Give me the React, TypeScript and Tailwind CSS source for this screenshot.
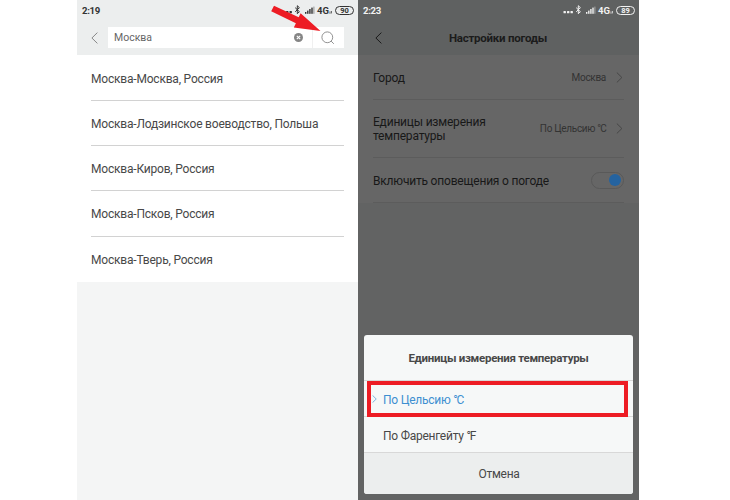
import React from "react";

const cities = [
  "Москва-Москва, Россия",
  "Москва-Лодзинское воеводство, Польша",
  "Москва-Киров, Россия",
  "Москва-Псков, Россия",
  "Москва-Тверь, Россия",
];

function StatusBar({ time, battery, dark }: { time: string; battery: string; dark?: boolean }) {
  return (
    <div className={`flex h-5 shrink-0 items-center justify-between pl-[5px] pr-1 ${dark ? "text-[#f2f2f2]" : "text-[#333]"}`}>
      <span className="pt-px text-[9.6px] font-bold leading-none tracking-[-0.3px]">{time}</span>
      <div className="flex items-center">
        <svg className="h-3 w-[35px]" viewBox="0 0 35 12" fill="currentColor">
          <rect x="0.5" y="7.1" width="2.4" height="2.2" rx="0.5" />
          <rect x="4" y="7.1" width="2.4" height="2.2" rx="0.5" />
          <rect x="7.5" y="7.1" width="2.4" height="2.2" rx="0.5" />
          <path d="M13.2 3.7 17.4 7.7 15.3 9.7V1.7L17.4 3.7 13.2 7.8" fill="none" stroke="currentColor" strokeWidth="1" />
          <rect x="23" y="8" width="1.4" height="1.8" />
          <rect x="25.1" y="6.6" width="1.4" height="3.2" />
          <rect x="27.2" y="5" width="1.4" height="4.8" />
          <rect x="29.3" y="3.6" width="1.4" height="6.2" />
          <rect x="31.4" y="2.6" width="1" height="7.2" opacity="0.5" />
        </svg>
        <span className="pt-px text-[9.5px] font-bold leading-none">4G</span>
        <svg className="mr-0.5 h-3 w-1" viewBox="0 0 4 12" fill="currentColor">
          <rect x="0.5" y="7.4" width="1" height="2.4" opacity="0.7" />
          <rect x="2" y="7" width="1" height="2.4" opacity="0.7" />
        </svg>
        <span className="flex h-[9px] w-[19px] items-center justify-center rounded-full border border-current pt-px text-[7.5px] font-bold leading-none">
          {battery}
        </span>
      </div>
    </div>
  );
}

function Chevron({ className, left }: { className: string; left?: boolean }) {
  return (
    <svg className={className} viewBox="0 0 7 12" fill="none" stroke="currentColor" strokeWidth="1">
      <path d={left ? "M6.4.6.9 6l5.5 5.4" : "M.6.6 6.1 6 .6 11.4"} />
    </svg>
  );
}

function SearchScreen() {
  return (
    <section className="relative flex h-full w-[281px] shrink-0 flex-col bg-[#f4f5f5]">
      <header className="h-[55px] shrink-0 bg-[#eceeee]">
        <StatusBar time="2:19" battery="90" />
        <div className="flex items-center pl-[14px] pr-[14px] pt-[7px]">
          <Chevron left className="h-3 w-[7px] text-[#888]" />
          <div className="ml-[10px] flex h-[21px] flex-1 items-center bg-white pl-[6px]">
            <span className="flex-1 pt-0.5 text-[10.5px] leading-none text-[#666]">Москва</span>
            <svg className="h-[9px] w-[9px]" viewBox="0 0 9 9">
              <circle cx="4.5" cy="4.5" r="4.5" fill="#858585" />
              <path d="m2.8 2.8 3.4 3.4m0-3.4L2.8 6.2" stroke="#fff" strokeWidth="1.1" />
            </svg>
            <div className="ml-[9px] flex h-[21px] w-8 items-center border-l border-[#f0f0f0] pl-2">
              <svg className="h-[14px] w-[14px]" viewBox="0 0 14 14" fill="none" stroke="#858585" strokeWidth="0.9">
                <circle cx="6.3" cy="6.3" r="5.4" />
                <path d="m10.1 10.1 2.7 2.7" />
              </svg>
            </div>
          </div>
        </div>
      </header>
      <ul className="h-[227px] shrink-0 bg-white px-[14px] pt-[0.6px]">
        {cities.map((city) => (
          <li key={city} className="flex h-[45.25px] items-center border-b border-[#d2d2d2] pt-0.5 text-[12px] tracking-[-0.2px] text-[#484848] last:border-0 last:pt-px">
            {city}
          </li>
        ))}
      </ul>
      <svg className="absolute left-[194px] top-[5px] h-[27px] w-[50px]" viewBox="0 0 50 27">
        <path d="M3 .8 27.7 12.2 29.6 8.2 49.5 26 22.8 22.4 24.9 18.2.2 6.2z" fill="#ed1c24" />
      </svg>
    </section>
  );
}

function SettingRow({ label, className, children }: { label: React.ReactNode; className: string; children: React.ReactNode }) {
  return (
    <div className={`flex items-center justify-between border-b border-[#5c5c5c] text-[12px] leading-[14px] tracking-[-0.2px] text-[#181818] ${className}`}>
      <span className="pt-px">{label}</span>
      {children}
    </div>
  );
}

function Value({ children }: { children: React.ReactNode }) {
  return (
    <span className="flex items-center text-[10px] tracking-[-0.3px] text-[#333]">
      <span className="pt-px">{children}</span>
      <Chevron className="ml-[10px] mr-px h-[11px] w-[7px] text-[#444]" />
    </span>
  );
}

function SettingsScreen() {
  return (
    <section className="relative flex h-full w-[281px] shrink-0 flex-col bg-[#626363]">
      <header className="h-[55px] shrink-0 bg-[#5f6161]">
        <StatusBar time="2:23" battery="89" dark />
        <div className="flex h-9 items-center pl-[17px] text-[#1b1b1b]">
          <Chevron left className="h-3 w-[7px]" />
          <h1 className="flex-1 pr-[25px] pt-px text-center text-[11.5px] font-bold tracking-[-0.25px]">Настройки погоды</h1>
        </div>
      </header>
      <div className="h-[148px] shrink-0 bg-[#666] px-[15px]">
        <SettingRow label="Город" className="h-[45px]"><Value>Москва</Value></SettingRow>
        <SettingRow label={<>Единицы измерения<br />температуры</>} className="h-[58px]"><Value>По Цельсию <span className="tracking-[-0.8px]">°C</span></Value></SettingRow>
        <SettingRow label="Включить оповещения о погоде" className="h-[45px]">
          <span className="flex h-[17px] w-[33px] items-center justify-end rounded-full border border-[#595959] pr-[2px]">
            <span className="h-3 w-3 rounded-full bg-[#2463a0]" />
          </span>
        </SettingRow>
      </div>
      <div role="dialog" className="absolute left-[6px] top-[335px] flex h-[159px] w-[269px] flex-col overflow-hidden rounded-[3px] bg-[#f6f8f8] text-[12px] tracking-[-0.25px] text-[#484848]">
        <h2 className="flex h-[46px] items-center justify-center border-b border-[#d8d8d8] pt-0.5 text-[11.5px] font-bold tracking-[-0.28px]">Единицы измерения температуры</h2>
        <div className="flex h-9 items-center border-b border-[#d8d8d8] pl-[8px] text-[#3d8fd1]">
          <Chevron className="mr-[6px] h-2 w-[5px]" />
          <span className="pt-0.5">По Цельсию <span className="tracking-[-1.2px]">°C</span></span>
        </div>
        <div className="flex h-9 items-center border-b border-[#d8d8d8] pl-[19px]">
          <span className="pt-0.5">По Фаренгейту <span className="tracking-[-1.2px]">°F</span></span>
        </div>
        <button className="flex-1 bg-[#eceeee] pl-px">Отмена</button>
      </div>
      <div className="absolute left-[9px] top-[381px] h-9 w-[261px] border-4 border-[#ed1c24]" />
    </section>
  );
}

export default function App() {
  return (
    <main className="flex h-[500px] w-[730px] overflow-hidden bg-white pl-[77px] font-[Roboto,'Noto_Sans',sans-serif]">
      <SearchScreen />
      <SettingsScreen />
    </main>
  );
}
